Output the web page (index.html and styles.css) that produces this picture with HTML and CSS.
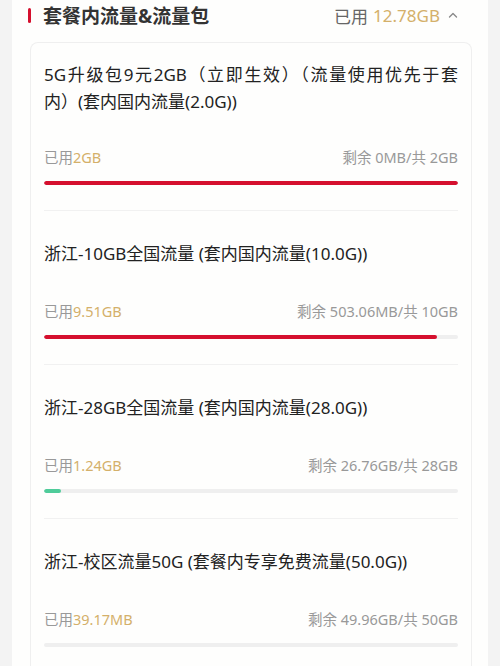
FILE: index.html
```html
<!DOCTYPE html>
<html lang="zh-CN">
<head>
    <meta charset="UTF-8">
    <meta name="viewport" content="width=device-width, initial-scale=1.0">
    <title>套餐内流量&amp;流量包</title>
    <link rel="stylesheet" href="styles.css">
</head>
<body>
    <div class="panel">
        <div class="header">
            <div class="header-title">
                <span class="mark"></span>
                <h2>套餐内流量&amp;流量包</h2>
            </div>
            <div class="header-used">
                <span>已用</span>
                <span class="gold">12.78GB</span>
                <svg class="chevron" width="10" height="8" viewBox="0 0 10 8">
                    <polyline points="1.5,6 5,2.5 8.5,6" fill="none" stroke="#8a8a8a" stroke-width="1.4" stroke-linecap="round" stroke-linejoin="round"/>
                </svg>
            </div>
        </div>

        <div class="card">
            <div class="item">
                <p class="item-title"><span class="full-line">5G升级包9元2GB（立即生效）（流量使用优先于套</span>内）(套内国内流量(2.0G))</p>
                <div class="usage">
                    <span>已用<span class="gold">2GB</span></span>
                    <span>剩余 0MB/共 2GB</span>
                </div>
                <div class="track"><div class="fill red" style="width: 100%"></div></div>
            </div>

            <div class="item">
                <p class="item-title">浙江-10GB全国流量 (套内国内流量(10.0G))</p>
                <div class="usage">
                    <span>已用<span class="gold">9.51GB</span></span>
                    <span>剩余 503.06MB/共 10GB</span>
                </div>
                <div class="track"><div class="fill red" style="width: 95%"></div></div>
            </div>

            <div class="item">
                <p class="item-title">浙江-28GB全国流量 (套内国内流量(28.0G))</p>
                <div class="usage">
                    <span>已用<span class="gold">1.24GB</span></span>
                    <span>剩余 26.76GB/共 28GB</span>
                </div>
                <div class="track"><div class="fill green" style="width: 4%"></div></div>
            </div>

            <div class="item">
                <p class="item-title">浙江-校区流量50G (套餐内专享免费流量(50.0G))</p>
                <div class="usage">
                    <span>已用<span class="gold">39.17MB</span></span>
                    <span>剩余 49.96GB/共 50GB</span>
                </div>
                <div class="track"><div class="fill green" style="width: 0%"></div></div>
            </div>
        </div>
    </div>
</body>
</html>
```

FILE: styles.css
```css
* {
    margin: 0;
    padding: 0;
    box-sizing: border-box;
}

body {
    background-color: #f3f3f3;
    font-family: "Noto Sans", "Noto Sans CJK SC", sans-serif;
    color: #333;
}

.panel {
    margin: 0 12px;
    min-height: 666px;
    background-color: #fefefd;
    padding: 0 16px 0 18px;
}

.header {
    height: 30px;
    display: flex;
    justify-content: space-between;
    align-items: center;
}

.header-title {
    display: flex;
    align-items: center;
    margin-left: -2px;
}

.mark {
    width: 3px;
    height: 15px;
    border-radius: 2px;
    background-color: #d5102e;
    margin-right: 12px;
}

.header-title h2 {
    font-size: 19px;
    font-weight: bold;
    color: #333;
}

.header-used {
    display: flex;
    align-items: center;
    font-size: 17px;
    color: #666;
    margin-right: 14px;
}

.header-used .gold {
    margin-left: 5px;
}

.chevron {
    margin-left: 8px;
}

.gold {
    color: #d4b06a;
}

.card {
    margin-top: 12px;
    border: 1px solid #efefef;
    border-bottom: none;
    border-radius: 8px 8px 0 0;
    padding: 0 13px;
}

.item {
    padding: 29px 0 25px;
    border-top: 1px solid #f1f1f1;
}

.item:first-child {
    padding-top: 18px;
    border-top: none;
}

.item-title {
    font-size: 17px;
    line-height: 27px;
    color: #222;
}

/* first line of the long title is stretched to the full width */
.full-line {
    display: block;
    text-align: justify;
    text-align-last: justify;
}

.usage {
    margin-top: 34px;
    display: flex;
    justify-content: space-between;
    font-size: 14.5px;
    line-height: 20px;
    color: #999;
}

.item:first-child .usage {
    margin-top: 32px;
}

.track {
    margin-top: 14px;
    height: 4px;
    border-radius: 2px;
    background-color: #efefef;
    overflow: hidden;
}

.fill {
    height: 100%;
    border-radius: 2px;
}

.red {
    background-color: #d5102e;
}

.green {
    background-color: #4fcc9a;
}
```
